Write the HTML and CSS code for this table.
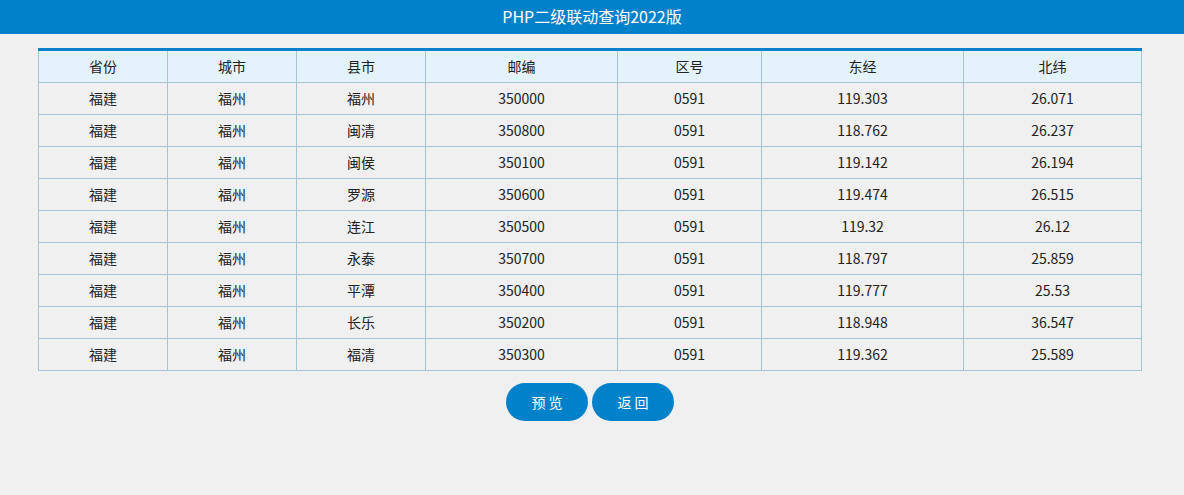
FILE: index.html
```html
<!DOCTYPE html>
<html lang="zh-CN">
<head>
<meta charset="utf-8">
<title>PHP二级联动查询2022版</title>
<link rel="stylesheet" href="styles.css">
</head>
<body>
<header class="topbar">PHP二级联动查询2022版</header>
<main class="content">
  <table class="data">
    <colgroup>
      <col class="c1"><col class="c2"><col class="c3"><col class="c4"><col class="c5"><col class="c6"><col class="c7">
    </colgroup>
    <thead>
      <tr><th>省份</th><th>城市</th><th>县市</th><th>邮编</th><th>区号</th><th>东经</th><th>北纬</th></tr>
    </thead>
    <tbody>
      <tr><td>福建</td><td>福州</td><td>福州</td><td>350000</td><td>0591</td><td>119.303</td><td>26.071</td></tr>
      <tr><td>福建</td><td>福州</td><td>闽清</td><td>350800</td><td>0591</td><td>118.762</td><td>26.237</td></tr>
      <tr><td>福建</td><td>福州</td><td>闽侯</td><td>350100</td><td>0591</td><td>119.142</td><td>26.194</td></tr>
      <tr><td>福建</td><td>福州</td><td>罗源</td><td>350600</td><td>0591</td><td>119.474</td><td>26.515</td></tr>
      <tr><td>福建</td><td>福州</td><td>连江</td><td>350500</td><td>0591</td><td>119.32</td><td>26.12</td></tr>
      <tr><td>福建</td><td>福州</td><td>永泰</td><td>350700</td><td>0591</td><td>118.797</td><td>25.859</td></tr>
      <tr><td>福建</td><td>福州</td><td>平潭</td><td>350400</td><td>0591</td><td>119.777</td><td>25.53</td></tr>
      <tr><td>福建</td><td>福州</td><td>长乐</td><td>350200</td><td>0591</td><td>118.948</td><td>36.547</td></tr>
      <tr><td>福建</td><td>福州</td><td>福清</td><td>350300</td><td>0591</td><td>119.362</td><td>25.589</td></tr>
    </tbody>
  </table>
  <div class="actions">
    <button class="btn" type="button">预览</button>
    <button class="btn" type="button">返回</button>
  </div>
</main>
</body>
</html>
```

FILE: styles.css
```css
html, body {
  margin: 0;
  padding: 0;
}
body {
  background: #f0f0f0;
  font-family: "Noto Sans CJK SC", "Noto Sans", sans-serif;
  color: #222;
  width: 1184px;
  height: 495px;
  overflow: hidden;
}
.topbar {
  height: 34px;
  background: #0281cb;
  color: #fff;
  font-size: 16px;
  line-height: 32px;
  text-align: center;
}
.content {
  padding: 14px 0 0 38px;
}
.data {
  border-collapse: collapse;
  table-layout: fixed;
  width: 1103px;
  border-top: 3px solid #0281cb;
  font-size: 14px;
  text-align: center;
}
.c1, .c2, .c3 { width: 129px; }
.c4 { width: 192px; }
.c5 { width: 144px; }
.c6 { width: 202px; }
.c7 { width: 178px; }
.data th,
.data td {
  border: 1px solid #a6c4d4;
  padding: 0 0 2px;
  font-weight: normal;
}
.data thead tr {
  background: #e4f2fb;
}
.data th {
  height: 29px;
  border-top: none;
}
.data td {
  height: 29px;
}
.actions {
  width: 1104px;
  display: flex;
  justify-content: center;
  gap: 4px;
  margin-top: 12px;
}
.btn {
  width: 82px;
  height: 38px;
  border: none;
  border-radius: 19px;
  background: #0281cb;
  color: #fff;
  font-family: "Noto Sans CJK SC", sans-serif;
  font-size: 14px;
  letter-spacing: 3px;
  text-indent: 3px;
  padding: 0;
}
```
